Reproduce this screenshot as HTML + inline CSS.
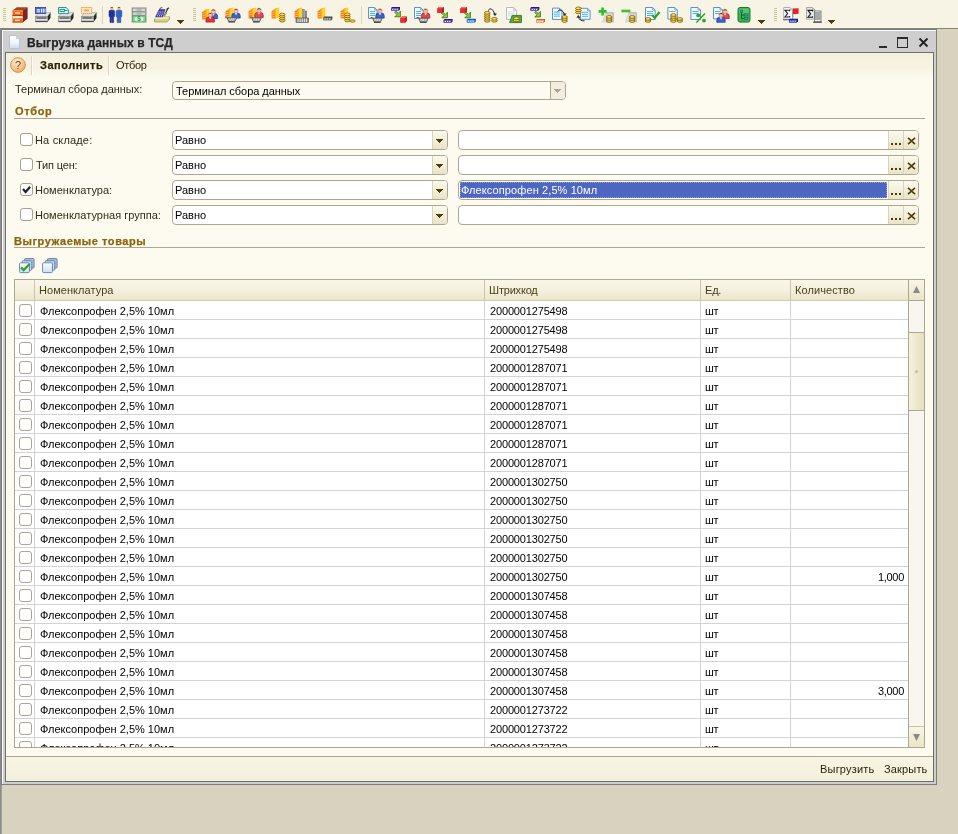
<!DOCTYPE html>
<html lang="ru"><head><meta charset="utf-8"><title>Выгрузка данных в ТСД</title>
<style>
html,body{margin:0;padding:0}
body{width:958px;height:834px;position:relative;overflow:hidden;background:#d8d3bf;font-family:"Liberation Sans", sans-serif;font-size:11px}
div,svg{box-sizing:border-box}

.abs{position:absolute}
.tb{position:absolute;left:0;top:0;width:958px;height:28px;background:#f7f4e5}
.ic{position:absolute;top:7px;width:16px;height:16px;overflow:visible}
.grip{position:absolute;top:8px;width:3px;height:13px;background:repeating-linear-gradient(to bottom,#c9c3a4 0,#c9c3a4 1px,transparent 1px,transparent 2px)}
.tsep{position:absolute;top:6px;width:1px;height:18px;background:#dcd6bd}
.darr{position:absolute;width:7px;height:4px;background:#4d3d0a;clip-path:polygon(0 0,7px 0,7px 1px,6px 1px,6px 2px,5px 2px,5px 3px,4px 3px,4px 4px,3px 4px,3px 3px,2px 3px,2px 2px,1px 2px,1px 1px,0 1px)}
.win{position:absolute;left:1px;top:29px;width:936px;height:756px;background:#cececf;border:1px solid #7d7d7d}
.winhl{position:absolute;left:0;top:0;right:0;bottom:0;border-top:1px solid #fafafa;border-left:1px solid #fafafa}
.inner{position:absolute;left:5px;top:52px;width:929px;height:730px;border:1px solid #6e6e6e;background:#fdfbf0}
.cmd{position:absolute;left:6px;top:53px;width:927px;height:24px;background:linear-gradient(to bottom,#f3f0dc 0,#f6f3e2 60%,#fcfaee 100%)}
.fld{position:absolute;height:20px;border:1px solid #aca791;border-radius:4px;background:#fff}
.btn{position:absolute;top:0;height:18px;width:15px;background:linear-gradient(to bottom,#fbf9ee 0,#f3efda 50%,#e9e3c8 100%);border-left:1px solid #d9d3b8}
.cb{position:absolute;width:13px;height:13px;border:1px solid #a8a28c;border-radius:3px;background:#fff}
.sec{position:absolute;height:1px;background:#aca791}
.lbl{color:#2e2b18}
.hdr{position:absolute;top:280px;height:20px;background:linear-gradient(to bottom,#f9f7ea 0,#f5f1df 45%,#ece6cb 100%);border-right:1px solid #c9c2a3}
.row{position:absolute;left:15px;width:893px;height:19px;border-bottom:1px solid #d0d3da}
.row div{line-height:14px}
.vl{position:absolute;top:301px;width:1px;height:446px;background:#d0d3da}

</style></head><body><div id="root" style="position:absolute;left:0;top:0;width:958px;height:834px;will-change:transform">
<div class="tb">
<div class="grip" style="left:3px"></div>
<svg class="ic" style="left:12px" viewBox="0 0 16 16"><polygon points="0.5,3.4 4.8,0.3 15.6,0.3 10.8,3.4" fill="#a54031"/><polygon points="10.8,3.4 15.6,0.3 15.6,11.4 10.8,15.4" fill="#7c241b"/><rect x="0.5" y="3.4" width="10.3" height="12" fill="#f2641a"/><rect x="0.5" y="3.4" width="10.3" height="1" fill="#ff8c42"/><path d="M0.5,8.6 H10.8" stroke="#a63a06" stroke-width="1"/><rect x="0.9" y="9.2" width="9.6" height="2" fill="#fff6ee"/><rect x="3" y="5.2" width="5" height="1.5" fill="#ffe7a3"/><rect x="3" y="12.6" width="5" height="1.5" fill="#ffe7a3"/><path d="M0.5,15.2 H10.8" stroke="#c04a0a" stroke-width="0.8"/></svg>
<svg class="ic" style="left:35px" viewBox="0 0 16 16"><polygon points="0.5,9.4 3.6,5.6 15.5,5.6 12.6,9.4" fill="#e4e4e4" stroke="#8d8d8d" stroke-width="0.5"/><polygon points="12.6,9.4 15.5,5.6 15.5,11 12.6,14.8" fill="#262626"/><rect x="0.5" y="9.4" width="12.1" height="5.4" fill="#b9b9b9" stroke="#777" stroke-width="0.5"/><path d="M1.6,11 H11.4" stroke="#4a4a4a" stroke-width="1.1"/><path d="M1,12.7 H12.2" stroke="#efefef" stroke-width="0.9"/><path d="M0.6,14.6 H12.6" stroke="#3c3c3c" stroke-width="0.9"/><rect x="0.5" y="0.5" width="10.2" height="6" fill="#3d5fd0" stroke="#2a3f9c" stroke-width="0.8"/><rect x="1.6" y="2.2" width="3.6" height="1.4" fill="#e8eeff"/><rect x="1.6" y="4.2" width="3.6" height="1.2" fill="#e8eeff"/><rect x="6" y="1.6" width="1.1" height="4" fill="#e8eeff"/><rect x="7.8" y="1.6" width="1.1" height="4" fill="#e8eeff"/><rect x="9.5" y="1.6" width="0.9" height="4" fill="#e8eeff"/></svg>
<svg class="ic" style="left:58px" viewBox="0 0 16 16"><polygon points="0.5,9.4 3.6,5.6 15.5,5.6 12.6,9.4" fill="#e4e4e4" stroke="#8d8d8d" stroke-width="0.5"/><polygon points="12.6,9.4 15.5,5.6 15.5,11 12.6,14.8" fill="#262626"/><rect x="0.5" y="9.4" width="12.1" height="5.4" fill="#b9b9b9" stroke="#777" stroke-width="0.5"/><path d="M1.6,11 H11.4" stroke="#4a4a4a" stroke-width="1.1"/><path d="M1,12.7 H12.2" stroke="#efefef" stroke-width="0.9"/><path d="M0.6,14.6 H12.6" stroke="#3c3c3c" stroke-width="0.9"/><path d="M0.5,0.5 H8 L10.6,2.8 V6.6 H0.5 Z" fill="#d9f3f1" stroke="#2b9a97" stroke-width="1"/><path d="M2,2.4 H6.6 V4.6 H2 Z" fill="none" stroke="#1f8f8c" stroke-width="1"/><path d="M6.6,3.5 H9.6" stroke="#1f8f8c" stroke-width="1"/></svg>
<svg class="ic" style="left:81px" viewBox="0 0 16 16"><polygon points="0.5,9.4 3.6,5.6 15.5,5.6 12.6,9.4" fill="#e4e4e4" stroke="#8d8d8d" stroke-width="0.5"/><polygon points="12.6,9.4 15.5,5.6 15.5,11 12.6,14.8" fill="#262626"/><rect x="0.5" y="9.4" width="12.1" height="5.4" fill="#b9b9b9" stroke="#777" stroke-width="0.5"/><path d="M1.6,11 H11.4" stroke="#4a4a4a" stroke-width="1.1"/><path d="M1,12.7 H12.2" stroke="#efefef" stroke-width="0.9"/><path d="M0.6,14.6 H12.6" stroke="#3c3c3c" stroke-width="0.9"/><rect x="0.5" y="0.5" width="10.2" height="6" fill="#ffe9c9" stroke="#f08a24" stroke-width="1" stroke-dasharray="1.2 0.8"/><rect x="3" y="2.4" width="5" height="2" fill="#f4a35a"/></svg>
<svg class="ic" style="left:108px" viewBox="0 0 16 16"><circle cx="3.8000000000000003" cy="1.6" r="1.6" fill="#f2b48c"/><path d="M2.2,1 Q3.8000000000000003,-0.8 5.3999999999999995,1 Z" fill="#7a4a20"/><path d="M1.0,4.4 Q1.0,3.3 2.2,3.3 H5.3999999999999995 Q6.6,3.3 6.6,4.4 V9.6 H5.6,V15.6 H4.1 V10 H3.5 V15.6 H2.0 V9.6 H1.0 Z" fill="#1f2fa5" stroke="#14206e" stroke-width="0.5"/><circle cx="11.0" cy="1.6" r="1.6" fill="#f2b48c"/><path d="M9.4,1 Q11.0,-0.8 12.6,1 Z" fill="#7a4a20"/><path d="M8.2,4.4 Q8.2,3.3 9.4,3.3 H12.6 Q13.8,3.3 13.8,4.4 V9.6 H12.8,V15.6 H11.3 V10 H10.7 V15.6 H9.2 V9.6 H8.2 Z" fill="#2f62cf" stroke="#1c3c94" stroke-width="0.5"/></svg>
<svg class="ic" style="left:131px" viewBox="0 0 16 16"><rect x="0.6" y="0.4" width="15" height="15" fill="#a2aaa2"/><rect x="1.6" y="1.2" width="13" height="3.4" fill="#d7dcd7" stroke="#7c857c" stroke-width="0.6"/><rect x="1.6" y="5" width="13" height="3.4" fill="#cfd6cf" stroke="#7c857c" stroke-width="0.6"/><ellipse cx="8.1" cy="2.9" rx="3" ry="1" fill="#aeb6ae"/><ellipse cx="8.1" cy="6.7" rx="3" ry="1" fill="#aeb6ae"/><rect x="1.6" y="8.9" width="13" height="6" fill="#86d198" stroke="#4d9c60" stroke-width="0.7"/><ellipse cx="8.1" cy="11.9" rx="4.6" ry="2.5" fill="#d4fadc"/><text x="8.1" y="14.2" font-size="6.5" font-weight="bold" text-anchor="middle" fill="#2f8a45" font-family="Liberation Sans, sans-serif">$</text></svg>
<svg class="ic" style="left:154px" viewBox="0 0 16 16"><polygon points="0.5,12 3,9.6 15.5,9.6 15.5,12.6 13,15 0.5,15" fill="#d9cf8e" stroke="#8b8146" stroke-width="0.6"/><polygon points="0.5,12 3,9.6 15.5,9.6 13,12" fill="#efe8b8"/><polygon points="1.6,9.8 5.2,2.6 11,2.6 8.6,9.8" fill="#4b3fae" stroke="#2b2470" stroke-width="0.6"/><path d="M4.4,5 H9.4 M3.6,7 H8.8 M3,8.8 H8" stroke="#d9d4ff" stroke-width="1" stroke-dasharray="1 1"/><path d="M5.6,2.4 L6.6,0.8 H8.4" stroke="#333" stroke-width="0.9" fill="none"/><path d="M10,9 L13.6,2.2 M12.4,2.6 L15,0.8" stroke="#2f4a2a" stroke-width="1.3" fill="none"/><path d="M10,9.6 L12.4,5.6" stroke="#9aa06a" stroke-width="1.6"/></svg>
<svg class="ic" style="left:202px" viewBox="0 0 16 16"><g transform="translate(0,1)"><polygon points="0,4.2 4,1.6 4,11.5 0,11.5" fill="#f2801c"/><polygon points="4,1.6 7.6,0.6 7.6,10.4 4,11.5" fill="#ffd51c"/><polygon points="0,4.2 4,1.6 7.6,0.6 3.6,3" fill="#ffb437"/><path d="M0,6 L4,4.6 M0,8 L4,6.8 M0,10 L4,9" stroke="#ffc266" stroke-width="0.8"/><path d="M4,1.6 V11.5" stroke="#f6a81a" stroke-width="0.7"/></g><path d="M7.2,11.7 V9.4 Q7.2,6.8 9.8,6.6000000000000005 H13.0 Q15.600000000000001,6.8 15.600000000000001,9.4 V11.7 Z" fill="#3b63d6" stroke="#1b3796" stroke-width="0.7"/><path d="M10.1,6.7 L11.4,8.8 L12.700000000000001,6.7 Z" fill="#fff"/><circle cx="11.4" cy="4.5" r="2.2" fill="#f6c3a2" stroke="#b8785c" stroke-width="0.5"/><path d="M9.2,4.1 Q11.4,0.9000000000000001 13.600000000000001,4.1 Q11.4,2.6 9.2,4.1 Z" fill="#6a1d10"/><path d="M3.999999999999999,15.1 V12.8 Q3.999999999999999,10.2 6.6,10.0 H9.799999999999999 Q12.399999999999999,10.2 12.399999999999999,12.8 V15.1 Z" fill="#e8333a" stroke="#a01218" stroke-width="0.7"/><path d="M6.8999999999999995,10.1 L8.2,12.2 L9.5,10.1 Z" fill="#fff"/><circle cx="8.2" cy="7.8999999999999995" r="2.2" fill="#f6c3a2" stroke="#b8785c" stroke-width="0.5"/><path d="M5.999999999999999,7.5 Q8.2,4.3 10.399999999999999,7.5 Q8.2,6.0 5.999999999999999,7.5 Z" fill="#6a1d10"/></svg>
<svg class="ic" style="left:225px" viewBox="0 0 16 16"><g transform="translate(0.6,0)"><polygon points="0,4.2 4,1.6 4,11.5 0,11.5" fill="#f2801c"/><polygon points="4,1.6 7.6,0.6 7.6,10.4 4,11.5" fill="#ffd51c"/><polygon points="0,4.2 4,1.6 7.6,0.6 3.6,3" fill="#ffb437"/><path d="M0,6 L4,4.6 M0,8 L4,6.8 M0,10 L4,9" stroke="#ffc266" stroke-width="0.8"/><path d="M4,1.6 V11.5" stroke="#f6a81a" stroke-width="0.7"/></g><path d="M6.8,11.1 V8.8 Q6.8,6.199999999999999 9.4,6.0 H12.6 Q15.2,6.199999999999999 15.2,8.8 V11.1 Z" fill="#3b63d6" stroke="#1b3796" stroke-width="0.7"/><path d="M9.7,6.1 L11,8.2 L12.3,6.1 Z" fill="#fff"/><circle cx="11" cy="3.9" r="2.2" fill="#f6c3a2" stroke="#b8785c" stroke-width="0.5"/><path d="M8.8,3.5 Q11,0.30000000000000004 13.2,3.5 Q11,2.0 8.8,3.5 Z" fill="#6a1d10"/><g transform="translate(0,9.6)"><path d="M0,0.5 H2 L3.6,4.8 H10 L11.6,1.2 H2.4" fill="#e9e9e9" stroke="#575757" stroke-width="1"/><path d="M3.6,1.4 L5,4.6 M5.6,1.4 L6.6,4.6 M7.6,1.4 L8.2,4.6 M9.6,1.4 L9.6,4.6" stroke="#8b8b8b" stroke-width="0.7"/><path d="M3.4,5.4 H10" stroke="#444" stroke-width="1.1"/></g></svg>
<svg class="ic" style="left:248px" viewBox="0 0 16 16"><g transform="translate(0.6,0)"><polygon points="0,4.2 4,1.6 4,11.5 0,11.5" fill="#f2801c"/><polygon points="4,1.6 7.6,0.6 7.6,10.4 4,11.5" fill="#ffd51c"/><polygon points="0,4.2 4,1.6 7.6,0.6 3.6,3" fill="#ffb437"/><path d="M0,6 L4,4.6 M0,8 L4,6.8 M0,10 L4,9" stroke="#ffc266" stroke-width="0.8"/><path d="M4,1.6 V11.5" stroke="#f6a81a" stroke-width="0.7"/></g><path d="M6.8,10.5 V8.2 Q6.8,5.6 9.4,5.4 H12.6 Q15.2,5.6 15.2,8.2 V10.5 Z" fill="#e8474d" stroke="#a01218" stroke-width="0.7"/><path d="M9.7,5.5 L11,7.6 L12.3,5.5 Z" fill="#fff"/><circle cx="11" cy="3.3" r="2.2" fill="#f6c3a2" stroke="#b8785c" stroke-width="0.5"/><path d="M8.8,2.9 Q11,-0.30000000000000004 13.2,2.9 Q11,1.4 8.8,2.9 Z" fill="#6a1d10"/><g transform="translate(1.6,9.6)"><path d="M0,0.5 H2 L3.6,4.8 H10 L11.6,1.2 H2.4" fill="#e9e9e9" stroke="#575757" stroke-width="1"/><path d="M3.6,1.4 L5,4.6 M5.6,1.4 L6.6,4.6 M7.6,1.4 L8.2,4.6 M9.6,1.4 L9.6,4.6" stroke="#8b8b8b" stroke-width="0.7"/><path d="M3.4,5.4 H10" stroke="#444" stroke-width="1.1"/></g></svg>
<svg class="ic" style="left:271px" viewBox="0 0 16 16"><g transform="translate(0.6,0)"><polygon points="0,4.2 4,1.6 4,11.5 0,11.5" fill="#f2801c"/><polygon points="4,1.6 7.6,0.6 7.6,10.4 4,11.5" fill="#ffd51c"/><polygon points="0,4.2 4,1.6 7.6,0.6 3.6,3" fill="#ffb437"/><path d="M0,6 L4,4.6 M0,8 L4,6.8 M0,10 L4,9" stroke="#ffc266" stroke-width="0.8"/><path d="M4,1.6 V11.5" stroke="#f6a81a" stroke-width="0.7"/></g><ellipse cx="11.2" cy="13.6" rx="2.8" ry="1.35" fill="#ffd738" stroke="#6b4a00" stroke-width="0.75"/><path d="M9.6,13.25 H12.2" stroke="#fff6b8" stroke-width="0.55"/><ellipse cx="11.2" cy="11.6" rx="2.8" ry="1.35" fill="#ffd738" stroke="#6b4a00" stroke-width="0.75"/><path d="M9.6,11.25 H12.2" stroke="#fff6b8" stroke-width="0.55"/><ellipse cx="11.2" cy="9.6" rx="2.8" ry="1.35" fill="#ffd738" stroke="#6b4a00" stroke-width="0.75"/><path d="M9.6,9.25 H12.2" stroke="#fff6b8" stroke-width="0.55"/><ellipse cx="11.2" cy="7.6" rx="2.8" ry="1.35" fill="#ffd738" stroke="#6b4a00" stroke-width="0.75"/><path d="M9.6,7.25 H12.2" stroke="#fff6b8" stroke-width="0.55"/></svg>
<svg class="ic" style="left:294px" viewBox="0 0 16 16"><g transform="translate(0.6,0)"><polygon points="0,4.2 4,1.6 4,11.5 0,11.5" fill="#f2801c"/><polygon points="4,1.6 7.6,0.6 7.6,10.4 4,11.5" fill="#ffd51c"/><polygon points="0,4.2 4,1.6 7.6,0.6 3.6,3" fill="#ffb437"/><path d="M0,6 L4,4.6 M0,8 L4,6.8 M0,10 L4,9" stroke="#ffc266" stroke-width="0.8"/><path d="M4,1.6 V11.5" stroke="#f6a81a" stroke-width="0.7"/></g><rect x="8.6" y="2.4" width="1.6" height="9" fill="#8d9aa0" stroke="#4d585c" stroke-width="0.4"/><rect x="11.2" y="4" width="1.6" height="7.6" fill="#8d9aa0" stroke="#4d585c" stroke-width="0.4"/><rect x="2" y="11" width="12.6" height="4.4" fill="#8a8a8a" stroke="#4b4b4b" stroke-width="0.6"/><path d="M4,11.6 V15 M6.2,11.6 V15 M8.4,11.6 V15 M10.6,11.6 V15 M12.6,11.6 V15" stroke="#e6e6e6" stroke-width="1"/></svg>
<svg class="ic" style="left:317px" viewBox="0 0 16 16"><g transform="translate(0.6,0)"><polygon points="0,4.2 4,1.6 4,11.5 0,11.5" fill="#f2801c"/><polygon points="4,1.6 7.6,0.6 7.6,10.4 4,11.5" fill="#ffd51c"/><polygon points="0,4.2 4,1.6 7.6,0.6 3.6,3" fill="#ffb437"/><path d="M0,6 L4,4.6 M0,8 L4,6.8 M0,10 L4,9" stroke="#ffc266" stroke-width="0.8"/><path d="M4,1.6 V11.5" stroke="#f6a81a" stroke-width="0.7"/></g><polygon points="6.4,10.6 7.4,9.6 15.4,9.6 15.4,12.1 14.4,13.2 6.4,13.2" fill="#3c3c3c"/><rect x="6.4" y="10.6" width="8" height="2.6" fill="#7b7b7b"/><rect x="7.6000000000000005" y="11.4" width="1.2" height="1.1" fill="#d6d6d6"/><rect x="9.8" y="11.4" width="1.2" height="1.1" fill="#d6d6d6"/><rect x="12.0" y="11.4" width="1.2" height="1.1" fill="#d6d6d6"/></svg>
<svg class="ic" style="left:340px" viewBox="0 0 16 16"><g transform="translate(0.6,0)"><polygon points="0,4.2 4,1.6 4,11.5 0,11.5" fill="#f2801c"/><polygon points="4,1.6 7.6,0.6 7.6,10.4 4,11.5" fill="#ffd51c"/><polygon points="0,4.2 4,1.6 7.6,0.6 3.6,3" fill="#ffb437"/><path d="M0,6 L4,4.6 M0,8 L4,6.8 M0,10 L4,9" stroke="#ffc266" stroke-width="0.8"/><path d="M4,1.6 V11.5" stroke="#f6a81a" stroke-width="0.7"/></g><ellipse cx="7.4" cy="13.4" rx="2.8" ry="1.35" fill="#ffd738" stroke="#6b4a00" stroke-width="0.75"/><path d="M5.800000000000001,13.05 H8.4" stroke="#fff6b8" stroke-width="0.55"/><ellipse cx="7.4" cy="11.4" rx="2.8" ry="1.35" fill="#ffd738" stroke="#6b4a00" stroke-width="0.75"/><path d="M5.800000000000001,11.05 H8.4" stroke="#fff6b8" stroke-width="0.55"/><ellipse cx="7.4" cy="9.4" rx="2.8" ry="1.35" fill="#ffd738" stroke="#6b4a00" stroke-width="0.75"/><path d="M5.800000000000001,9.05 H8.4" stroke="#fff6b8" stroke-width="0.55"/><ellipse cx="7.4" cy="7.4" rx="2.8" ry="1.35" fill="#ffd738" stroke="#6b4a00" stroke-width="0.75"/><path d="M5.800000000000001,7.050000000000001 H8.4" stroke="#fff6b8" stroke-width="0.55"/><ellipse cx="12.4" cy="14" rx="2.8" ry="1.2" fill="#f7cf2e" stroke="#7a5a00" stroke-width="0.7"/></svg>
<svg class="ic" style="left:368px" viewBox="0 0 16 16"><path d="M0.5,0.5 H6.6 L9.1,3 V11.5 H0.5 Z" fill="#f3f9ff" stroke="#5f93c4" stroke-width="1"/><path d="M6.6,0.5 V3 H9.1" fill="none" stroke="#5f93c4" stroke-width="0.8"/><path d="M2,4.5 H7.1" stroke="#4fb4e6" stroke-width="1"/><path d="M2,6.5 H7.1" stroke="#4fb4e6" stroke-width="1"/><path d="M2,8.5 H7.1" stroke="#4fb4e6" stroke-width="1"/><path d="M7.8,11.1 V8.8 Q7.8,6.199999999999999 10.4,6.0 H13.6 Q16.2,6.199999999999999 16.2,8.8 V11.1 Z" fill="#3b63d6" stroke="#1b3796" stroke-width="0.7"/><path d="M10.7,6.1 L12,8.2 L13.3,6.1 Z" fill="#fff"/><circle cx="12" cy="3.9" r="2.2" fill="#f6c3a2" stroke="#b8785c" stroke-width="0.5"/><path d="M9.8,3.5 Q12,0.30000000000000004 14.2,3.5 Q12,2.0 9.8,3.5 Z" fill="#6a1d10"/><g transform="translate(2.6,10)"><path d="M0,0.5 H2 L3.6,4.8 H10 L11.6,1.2 H2.4" fill="#e9e9e9" stroke="#575757" stroke-width="1"/><path d="M3.6,1.4 L5,4.6 M5.6,1.4 L6.6,4.6 M7.6,1.4 L8.2,4.6 M9.6,1.4 L9.6,4.6" stroke="#8b8b8b" stroke-width="0.7"/><path d="M3.4,5.4 H10" stroke="#444" stroke-width="1.1"/></g></svg>
<svg class="ic" style="left:391px" viewBox="0 0 16 16"><polygon points="0,1 1,0 9,0 9,2.5 8,3.6 0,3.6" fill="#2a1a78"/><rect x="0" y="1" width="8" height="2.6" fill="#5b3fc4"/><rect x="1.2" y="1.8" width="1.2" height="1.1" fill="#fff"/><rect x="3.4" y="1.8" width="1.2" height="1.1" fill="#fff"/><rect x="5.6" y="1.8" width="1.2" height="1.1" fill="#fff"/><path d="M3.6,5.2 L4.8,4 L7.2,6.4 L9.4,4.2 V9.8 H3.8000000000000003 L6.0,7.6 Z" fill="#8fd03a" stroke="#2e6b12" stroke-width="0.8"/><polygon points="9.4,11.1 10.9,9.6 15.9,9.6 15.9,14.1 14.4,15.6 9.4,15.6" fill="#a80f14"/><rect x="9.4" y="11.1" width="5" height="4.5" fill="#ee2a2f"/><polygon points="9.4,11.1 10.9,9.6 15.9,9.6 14.4,11.1" fill="#ff6b6b"/></svg>
<svg class="ic" style="left:414px" viewBox="0 0 16 16"><path d="M0.5,0.5 H6.6 L9.1,3 V11.5 H0.5 Z" fill="#f3f9ff" stroke="#5f93c4" stroke-width="1"/><path d="M6.6,0.5 V3 H9.1" fill="none" stroke="#5f93c4" stroke-width="0.8"/><path d="M2,4.5 H7.1" stroke="#4fb4e6" stroke-width="1"/><path d="M2,6.5 H7.1" stroke="#4fb4e6" stroke-width="1"/><path d="M2,8.5 H7.1" stroke="#4fb4e6" stroke-width="1"/><path d="M7.3999999999999995,11.1 V8.8 Q7.3999999999999995,6.199999999999999 10.0,6.0 H13.2 Q15.8,6.199999999999999 15.8,8.8 V11.1 Z" fill="#e8474d" stroke="#a01218" stroke-width="0.7"/><path d="M10.299999999999999,6.1 L11.6,8.2 L12.9,6.1 Z" fill="#fff"/><circle cx="11.6" cy="3.9" r="2.2" fill="#f6c3a2" stroke="#b8785c" stroke-width="0.5"/><path d="M9.399999999999999,3.5 Q11.6,0.30000000000000004 13.8,3.5 Q11.6,2.0 9.399999999999999,3.5 Z" fill="#6a1d10"/><g transform="translate(2.6,10)"><path d="M0,0.5 H2 L3.6,4.8 H10 L11.6,1.2 H2.4" fill="#e9e9e9" stroke="#575757" stroke-width="1"/><path d="M3.6,1.4 L5,4.6 M5.6,1.4 L6.6,4.6 M7.6,1.4 L8.2,4.6 M9.6,1.4 L9.6,4.6" stroke="#8b8b8b" stroke-width="0.7"/><path d="M3.4,5.4 H10" stroke="#444" stroke-width="1.1"/></g></svg>
<svg class="ic" style="left:437px" viewBox="0 0 16 16"><polygon points="0.4,1.5 1.9,0 6.9,0 6.9,4.5 5.4,6 0.4,6" fill="#a80f14"/><rect x="0.4" y="1.5" width="5" height="4.5" fill="#ee2a2f"/><polygon points="0.4,1.5 1.9,0 6.9,0 5.4,1.5" fill="#ff6b6b"/><path d="M4.6,6.2 L5.8,5 L8.2,7.4 L10.399999999999999,5.2 V10.8 H4.8 L7.0,8.6 Z" fill="#8fd03a" stroke="#2e6b12" stroke-width="0.8"/><polygon points="6.6,13 7.6,12 15.6,12 15.6,14.5 14.6,15.6 6.6,15.6" fill="#2a1a78"/><rect x="6.6" y="13" width="8" height="2.6" fill="#5b3fc4"/><rect x="7.8" y="13.8" width="1.2" height="1.1" fill="#fff"/><rect x="10.0" y="13.8" width="1.2" height="1.1" fill="#fff"/><rect x="12.2" y="13.8" width="1.2" height="1.1" fill="#fff"/></svg>
<svg class="ic" style="left:460px" viewBox="0 0 16 16"><polygon points="0.4,1.5 1.9,0 6.9,0 6.9,4.5 5.4,6 0.4,6" fill="#a80f14"/><rect x="0.4" y="1.5" width="5" height="4.5" fill="#ee2a2f"/><polygon points="0.4,1.5 1.9,0 6.9,0 5.4,1.5" fill="#ff6b6b"/><path d="M4.6,6.2 L5.8,5 L8.2,7.4 L10.399999999999999,5.2 V10.8 H4.8 L7.0,8.6 Z" fill="#8fd03a" stroke="#2e6b12" stroke-width="0.8"/><polygon points="6.8,12.8 7.8,11.8 15.8,11.8 15.8,14.3 14.8,15.4 6.8,15.4" fill="#1a4ea8"/><rect x="6.8" y="12.8" width="8" height="2.6" fill="#3f8ff0"/><rect x="8.0" y="13.600000000000001" width="1.2" height="1.1" fill="#fff"/><rect x="10.2" y="13.600000000000001" width="1.2" height="1.1" fill="#fff"/><rect x="12.399999999999999" y="13.600000000000001" width="1.2" height="1.1" fill="#fff"/></svg>
<svg class="ic" style="left:483px" viewBox="0 0 16 16"><ellipse cx="4.2" cy="13.8" rx="2.8" ry="1.35" fill="#ffd738" stroke="#6b4a00" stroke-width="0.75"/><path d="M2.6,13.450000000000001 H5.2" stroke="#fff6b8" stroke-width="0.55"/><ellipse cx="4.2" cy="11.8" rx="2.8" ry="1.35" fill="#ffd738" stroke="#6b4a00" stroke-width="0.75"/><path d="M2.6,11.450000000000001 H5.2" stroke="#fff6b8" stroke-width="0.55"/><ellipse cx="4.2" cy="9.8" rx="2.8" ry="1.35" fill="#ffd738" stroke="#6b4a00" stroke-width="0.75"/><path d="M2.6,9.450000000000001 H5.2" stroke="#fff6b8" stroke-width="0.55"/><ellipse cx="4.2" cy="7.800000000000001" rx="2.8" ry="1.35" fill="#ffd738" stroke="#6b4a00" stroke-width="0.75"/><path d="M2.6,7.450000000000001 H5.2" stroke="#fff6b8" stroke-width="0.55"/><ellipse cx="4.2" cy="5.800000000000001" rx="2.8" ry="1.35" fill="#ffd738" stroke="#6b4a00" stroke-width="0.75"/><path d="M2.6,5.450000000000001 H5.2" stroke="#fff6b8" stroke-width="0.55"/><ellipse cx="11.4" cy="13.8" rx="2.8" ry="1.35" fill="#ffd738" stroke="#6b4a00" stroke-width="0.75"/><path d="M9.8,13.450000000000001 H12.4" stroke="#fff6b8" stroke-width="0.55"/><ellipse cx="11.4" cy="11.8" rx="2.8" ry="1.35" fill="#ffd738" stroke="#6b4a00" stroke-width="0.75"/><path d="M9.8,11.450000000000001 H12.4" stroke="#fff6b8" stroke-width="0.55"/><path d="M5,3.6 Q8.5,-1.4 12,7.3999999999999995" fill="none" stroke="#1c2a44" stroke-width="1"/><path d="M10,6.6 L12,9.0 L14,6.6 Z" fill="#1c2a44"/></svg>
<svg class="ic" style="left:506px" viewBox="0 0 16 16"><path d="M0.5,0.5 H7.6 L10.5,3.4 V12.5 H0.5 Z" fill="#fbfbff" stroke="#b8b8c2" stroke-width="1"/><path d="M7.6,0.5 V3.4 H10.5" fill="none" stroke="#b8b8c2" stroke-width="0.8"/><path d="M2,4.9 H8.5" stroke="#d5d5de" stroke-width="1"/><path d="M2,6.9 H8.5" stroke="#d5d5de" stroke-width="1"/><path d="M2,8.9 H8.5" stroke="#d5d5de" stroke-width="1"/><polygon points="3.6,15.6 6.2,8.4 15.4,8.4 15.4,15.6" fill="#4fae3c" stroke="#256a1c" stroke-width="0.8"/><ellipse cx="10.4" cy="13.4" rx="2.8" ry="1.35" fill="#ffd738" stroke="#6b4a00" stroke-width="0.75"/><path d="M8.8,13.05 H11.4" stroke="#fff6b8" stroke-width="0.55"/><ellipse cx="10.4" cy="11.4" rx="2.8" ry="1.35" fill="#ffd738" stroke="#6b4a00" stroke-width="0.75"/><path d="M8.8,11.05 H11.4" stroke="#fff6b8" stroke-width="0.55"/></svg>
<svg class="ic" style="left:529px" viewBox="0 0 16 16"><polygon points="1.4,1 2.4,0 10.4,0 10.4,2.5 9.4,3.6 1.4,3.6" fill="#2a1a78"/><rect x="1.4" y="1" width="8" height="2.6" fill="#5b3fc4"/><rect x="2.5999999999999996" y="1.8" width="1.2" height="1.1" fill="#fff"/><rect x="4.8" y="1.8" width="1.2" height="1.1" fill="#fff"/><rect x="7.0" y="1.8" width="1.2" height="1.1" fill="#fff"/><path d="M5.6,5.4 L6.8,4.2 L9.2,6.6 L11.399999999999999,4.4 V10.0 H5.8 L8.0,7.800000000000001 Z" fill="#8fd03a" stroke="#2e6b12" stroke-width="0.8"/><polygon points="7,13 8,12 16,12 16,14.5 15,15.6 7,15.6" fill="#b9622a"/><rect x="7" y="13" width="8" height="2.6" fill="#f2a060"/><rect x="8.2" y="13.8" width="1.2" height="1.1" fill="#fff"/><rect x="10.4" y="13.8" width="1.2" height="1.1" fill="#fff"/><rect x="12.6" y="13.8" width="1.2" height="1.1" fill="#fff"/></svg>
<svg class="ic" style="left:552px" viewBox="0 0 16 16"><path d="M0.5,1.1 H7.4 L9.9,3.6 V12.5 H0.5 Z" fill="#f3f9ff" stroke="#5f93c4" stroke-width="1"/><path d="M7.4,1.1 V3.6 H9.9" fill="none" stroke="#5f93c4" stroke-width="0.8"/><path d="M2,5.1 H7.9" stroke="#4fb4e6" stroke-width="1"/><path d="M2,7.1 H7.9" stroke="#4fb4e6" stroke-width="1"/><path d="M2,9.1 H7.9" stroke="#4fb4e6" stroke-width="1"/><path d="M5.6,4.6 Q9.1,0.0 12.6,7.3999999999999995" fill="none" stroke="#1c2a44" stroke-width="1"/><path d="M10.6,6.6 L12.6,9.0 L14.6,6.6 Z" fill="#1c2a44"/><ellipse cx="12.6" cy="14.0" rx="2.8" ry="1.35" fill="#ffd738" stroke="#6b4a00" stroke-width="0.75"/><path d="M11.0,13.65 H13.6" stroke="#fff6b8" stroke-width="0.55"/><ellipse cx="12.6" cy="12.0" rx="2.8" ry="1.35" fill="#ffd738" stroke="#6b4a00" stroke-width="0.75"/><path d="M11.0,11.65 H13.6" stroke="#fff6b8" stroke-width="0.55"/><ellipse cx="12.6" cy="10.0" rx="2.8" ry="1.35" fill="#ffd738" stroke="#6b4a00" stroke-width="0.75"/><path d="M11.0,9.65 H13.6" stroke="#fff6b8" stroke-width="0.55"/></svg>
<svg class="ic" style="left:575px" viewBox="0 0 16 16"><path d="M5.5,1.3 H12.6 L15.1,3.8 V12.3 H5.5 Z" fill="#f3f9ff" stroke="#5f93c4" stroke-width="1"/><path d="M12.6,1.3 V3.8 H15.1" fill="none" stroke="#5f93c4" stroke-width="0.8"/><path d="M7,5.3 H13.1" stroke="#4fb4e6" stroke-width="1"/><path d="M7,7.3 H13.1" stroke="#4fb4e6" stroke-width="1"/><path d="M7,9.3 H13.1" stroke="#4fb4e6" stroke-width="1"/><ellipse cx="3.4" cy="5.4" rx="2.8" ry="1.35" fill="#ffd738" stroke="#6b4a00" stroke-width="0.75"/><path d="M1.7999999999999998,5.050000000000001 H4.4" stroke="#fff6b8" stroke-width="0.55"/><ellipse cx="3.4" cy="3.4000000000000004" rx="2.8" ry="1.35" fill="#ffd738" stroke="#6b4a00" stroke-width="0.75"/><path d="M1.7999999999999998,3.0500000000000003 H4.4" stroke="#fff6b8" stroke-width="0.55"/><ellipse cx="3.4" cy="1.4000000000000004" rx="2.8" ry="1.35" fill="#ffd738" stroke="#6b4a00" stroke-width="0.75"/><path d="M1.7999999999999998,1.0500000000000003 H4.4" stroke="#fff6b8" stroke-width="0.55"/><path d="M9.6,13.8 Q4.4,14.4 3.4,9.6" fill="none" stroke="#1c2a44" stroke-width="1"/><path d="M1.4,10.8 L3.4,8 L5.4,10.8 Z" fill="#1c2a44"/></svg>
<svg class="ic" style="left:598px" viewBox="0 0 16 16"><polygon points="3.6,15.6 7.6,5.6 15.4,5.6 15.4,15.6" fill="#d8d8d8"/><path d="M7.4,5.8 H15.2 V15.4" fill="none" stroke="#a0a0a0" stroke-width="0.8"/><path d="M4.6,0.4 V8.4 M0.6,4.4 H8.6" stroke="#27c31f" stroke-width="2.6"/><ellipse cx="11.2" cy="14.0" rx="2.8" ry="1.35" fill="#ffd738" stroke="#6b4a00" stroke-width="0.75"/><path d="M9.6,13.65 H12.2" stroke="#fff6b8" stroke-width="0.55"/><ellipse cx="11.2" cy="12.0" rx="2.8" ry="1.35" fill="#ffd738" stroke="#6b4a00" stroke-width="0.75"/><path d="M9.6,11.65 H12.2" stroke="#fff6b8" stroke-width="0.55"/><ellipse cx="11.2" cy="10.0" rx="2.8" ry="1.35" fill="#ffd738" stroke="#6b4a00" stroke-width="0.75"/><path d="M9.6,9.65 H12.2" stroke="#fff6b8" stroke-width="0.55"/></svg>
<svg class="ic" style="left:621px" viewBox="0 0 16 16"><polygon points="3.6,15.6 7.6,5.6 15.4,5.6 15.4,15.6" fill="#d8d8d8"/><path d="M7.4,5.8 H15.2 V15.4" fill="none" stroke="#a0a0a0" stroke-width="0.8"/><path d="M0.4,4 H9.4" stroke="#3ac232" stroke-width="2.6"/><ellipse cx="11.2" cy="14.0" rx="2.8" ry="1.35" fill="#ffd738" stroke="#6b4a00" stroke-width="0.75"/><path d="M9.6,13.65 H12.2" stroke="#fff6b8" stroke-width="0.55"/><ellipse cx="11.2" cy="12.0" rx="2.8" ry="1.35" fill="#ffd738" stroke="#6b4a00" stroke-width="0.75"/><path d="M9.6,11.65 H12.2" stroke="#fff6b8" stroke-width="0.55"/><ellipse cx="11.2" cy="10.0" rx="2.8" ry="1.35" fill="#ffd738" stroke="#6b4a00" stroke-width="0.75"/><path d="M9.6,9.65 H12.2" stroke="#fff6b8" stroke-width="0.55"/></svg>
<svg class="ic" style="left:644px" viewBox="0 0 16 16"><path d="M1.5,0.5 H8.6 L11.1,3 V12.5 H1.5 Z" fill="#f3f9ff" stroke="#5f93c4" stroke-width="1"/><path d="M8.6,0.5 V3 H11.1" fill="none" stroke="#5f93c4" stroke-width="0.8"/><path d="M3,4.5 H9.1" stroke="#4fb4e6" stroke-width="1"/><path d="M3,6.5 H9.1" stroke="#4fb4e6" stroke-width="1"/><path d="M3,8.5 H9.1" stroke="#4fb4e6" stroke-width="1"/><ellipse cx="4" cy="14.0" rx="2.8" ry="1.35" fill="#ffd738" stroke="#6b4a00" stroke-width="0.75"/><path d="M2.4,13.65 H5" stroke="#fff6b8" stroke-width="0.55"/><ellipse cx="4" cy="12.0" rx="2.8" ry="1.35" fill="#ffd738" stroke="#6b4a00" stroke-width="0.75"/><path d="M2.4,11.65 H5" stroke="#fff6b8" stroke-width="0.55"/><path d="M8.2,8 L10.8,10.8 L15.6,5" fill="none" stroke="#27a82a" stroke-width="2.2"/></svg>
<svg class="ic" style="left:667px" viewBox="0 0 16 16"><path d="M0.9,0.5 H7.800000000000001 L10.3,3 V12.1 H0.9 Z" fill="#f3f9ff" stroke="#5f93c4" stroke-width="1"/><path d="M7.800000000000001,0.5 V3 H10.3" fill="none" stroke="#5f93c4" stroke-width="0.8"/><path d="M2.4,4.5 H8.3" stroke="#4fb4e6" stroke-width="1"/><ellipse cx="6.4" cy="14.0" rx="2.8" ry="1.35" fill="#ffd738" stroke="#6b4a00" stroke-width="0.75"/><path d="M4.800000000000001,13.65 H7.4" stroke="#fff6b8" stroke-width="0.55"/><ellipse cx="6.4" cy="12.0" rx="2.8" ry="1.35" fill="#ffd738" stroke="#6b4a00" stroke-width="0.75"/><path d="M4.800000000000001,11.65 H7.4" stroke="#fff6b8" stroke-width="0.55"/><ellipse cx="6.4" cy="10.0" rx="2.8" ry="1.35" fill="#ffd738" stroke="#6b4a00" stroke-width="0.75"/><path d="M4.800000000000001,9.65 H7.4" stroke="#fff6b8" stroke-width="0.55"/><ellipse cx="6.4" cy="8.0" rx="2.8" ry="1.35" fill="#ffd738" stroke="#6b4a00" stroke-width="0.75"/><path d="M4.800000000000001,7.65 H7.4" stroke="#fff6b8" stroke-width="0.55"/><ellipse cx="12.8" cy="14.0" rx="2.8" ry="1.35" fill="#ffd738" stroke="#6b4a00" stroke-width="0.75"/><path d="M11.200000000000001,13.65 H13.8" stroke="#fff6b8" stroke-width="0.55"/><ellipse cx="12.8" cy="12.0" rx="2.8" ry="1.35" fill="#ffd738" stroke="#6b4a00" stroke-width="0.75"/><path d="M11.200000000000001,11.65 H13.8" stroke="#fff6b8" stroke-width="0.55"/></svg>
<svg class="ic" style="left:690px" viewBox="0 0 16 16"><path d="M0.9,0.5 H8.0 L10.5,3 V12.5 H0.9 Z" fill="#f3f9ff" stroke="#5f93c4" stroke-width="1"/><path d="M8.0,0.5 V3 H10.5" fill="none" stroke="#5f93c4" stroke-width="0.8"/><path d="M2.4,4.5 H8.5" stroke="#4fb4e6" stroke-width="1"/><path d="M2.4,6.5 H8.5" stroke="#4fb4e6" stroke-width="1"/><path d="M6.4,15.4 L15,6.4" stroke="#27a82a" stroke-width="1.5"/><circle cx="8.2" cy="8.4" r="1.9" fill="#27a82a"/><circle cx="14" cy="13.6" r="1.9" fill="#27a82a"/></svg>
<svg class="ic" style="left:713px" viewBox="0 0 16 16"><path d="M0.5,0.5 H7 L9.5,3 V11.9 H0.5 Z" fill="#f3f9ff" stroke="#5f93c4" stroke-width="1"/><path d="M7,0.5 V3 H9.5" fill="none" stroke="#5f93c4" stroke-width="0.8"/><path d="M2,4.5 H7.5" stroke="#4fb4e6" stroke-width="1"/><path d="M2,6.5 H7.5" stroke="#4fb4e6" stroke-width="1"/><path d="M7.8,11.5 V9.2 Q7.8,6.6 10.4,6.4 H13.6 Q16.2,6.6 16.2,9.2 V11.5 Z" fill="#e8474d" stroke="#a01218" stroke-width="0.7"/><path d="M10.7,6.5 L12,8.6 L13.3,6.5 Z" fill="#fff"/><circle cx="12" cy="4.3" r="2.2" fill="#f6c3a2" stroke="#b8785c" stroke-width="0.5"/><path d="M9.8,3.9 Q12,0.7 14.2,3.9 Q12,2.4 9.8,3.9 Z" fill="#6a1d10"/><path d="M3.8,15.3 V13.0 Q3.8,10.399999999999999 6.4,10.2 H9.6 Q12.2,10.399999999999999 12.2,13.0 V15.3 Z" fill="#3b63d6" stroke="#1b3796" stroke-width="0.7"/><path d="M6.7,10.3 L8,12.399999999999999 L9.3,10.3 Z" fill="#fff"/><circle cx="8" cy="8.1" r="2.2" fill="#f6c3a2" stroke="#b8785c" stroke-width="0.5"/><path d="M5.8,7.699999999999999 Q8,4.5 10.2,7.699999999999999 Q8,6.2 5.8,7.699999999999999 Z" fill="#6a1d10"/></svg>
<svg class="ic" style="left:736px" viewBox="0 0 16 16"><rect x="2" y="0.5" width="12" height="14.6" rx="2" fill="#35b24a" stroke="#1e7a30" stroke-width="1"/><rect x="3" y="1.4" width="10" height="5" rx="1.4" fill="#5fd070" opacity="0.7"/><rect x="4.2" y="3" width="2.6" height="2.4" fill="#38a0a0" stroke="#176060" stroke-width="0.5"/><path d="M5.5,5.4 V11.6 H8.6 M5.5,8 H8.6" fill="none" stroke="#0e5a2a" stroke-width="0.9"/><rect x="8.6" y="6.8" width="3.2" height="2.2" fill="#38a0a0" stroke="#176060" stroke-width="0.5"/><rect x="8.6" y="10.4" width="3.2" height="2.2" fill="#38a0a0" stroke="#176060" stroke-width="0.5"/></svg>
<svg class="ic" style="left:783px" viewBox="0 0 16 16"><path d="M0.7,0.5 H7.0 L9.5,3 V12.1 H0.7 Z" fill="#fcfcfc" stroke="#b0b0b0" stroke-width="1"/><path d="M7.0,0.5 V3 H9.5" fill="none" stroke="#b0b0b0" stroke-width="0.8"/><path d="M6.6,4.2 V3.2 H2 L4.6,6.6 L2,10.0 H6.6 V9.0" fill="none" stroke="#1d1d35" stroke-width="1.1"/><path d="M9.8,1.4 V11" stroke="#8a8a8a" stroke-width="0.8"/><polygon points="10,1.6 15.6,1.2 15.6,6.8 10,7.2" fill="#ee1c24"/><path d="M0,12.8 H9" stroke="#555" stroke-width="1"/><polygon points="6,12.8 7,11.8 15,11.8 15,14.3 14,15.4 6,15.4" fill="#151f80"/><rect x="6" y="12.8" width="8" height="2.6" fill="#2e3fd0"/><rect x="7.2" y="13.600000000000001" width="1.2" height="1.1" fill="#fff"/><rect x="9.4" y="13.600000000000001" width="1.2" height="1.1" fill="#fff"/><rect x="11.6" y="13.600000000000001" width="1.2" height="1.1" fill="#fff"/></svg>
<svg class="ic" style="left:806px" viewBox="0 0 16 16"><path d="M0.5,0.5 H6.6 L9.1,3 V12.1 H0.5 Z" fill="#e9e9e9" stroke="#a8a8a8" stroke-width="1"/><path d="M6.6,0.5 V3 H9.1" fill="none" stroke="#a8a8a8" stroke-width="0.8"/><path d="M6.6,4.4 V3.4 H2 L4.6,6.8 L2,10.2 H6.6 V9.2" fill="none" stroke="#1d1d1d" stroke-width="1.1"/><rect x="8.4" y="4" width="6.6" height="10.8" fill="#f4f4f4" stroke="#6a6a6a" stroke-width="0.8"/><path d="M9,6 H14.4 M9,8 H14.4 M9,10 H14.4 M9,12 H14.4" stroke="#5c5c5c" stroke-width="1"/><path d="M7.2,15.2 H15.8" stroke="#4a4a4a" stroke-width="1.2"/></svg>
<div class="tsep" style="left:102px"></div>
<div class="tsep" style="left:361px"></div>
<div class="grip" style="left:193px"></div>
<div class="grip" style="left:774px"></div>
<div class="darr" style="left:177px;top:20px"></div>
<div class="darr" style="left:758px;top:20px"></div>
<div class="darr" style="left:828px;top:20px"></div>
</div>
<div class="abs" style="left:0;top:28px;width:958px;height:1px;background:#858479"></div>
<div class="abs" style="left:0;top:28px;width:1px;height:806px;background:#8a8a86"></div>
<div class="abs" style="left:1px;top:785px;width:1px;height:49px;background:#a5a297"></div>
<div class="win"><div class="winhl"></div></div>
<svg class="abs" style="left:9px;top:35px;width:12px;height:14px" viewBox="0 0 12 14"><defs><linearGradient id="pg" x1="0" y1="0" x2="0" y2="1"><stop offset="0" stop-color="#ffffff"/><stop offset="0.55" stop-color="#f1f6fb"/><stop offset="1" stop-color="#c9dbec"/></linearGradient></defs><path d="M0.5,0.5 H7.6 L10.6,3.6 V13.5 H0.5 Z" fill="url(#pg)" stroke="#b9c3cf" stroke-width="1"/><path d="M7.6,0.5 V3.6 H10.6 Z" fill="#dfe7f0" stroke="#b9c3cf" stroke-width="0.8"/></svg>
<div style="position:absolute;top:36px;white-space:nowrap;font-size:12px;line-height:14px;color:#262626;left:27px;font-weight:bold;-webkit-text-stroke:0.25px;letter-spacing:0.1px;">Выгрузка данных в ТСД</div>
<div class="abs" style="left:879px;top:46px;width:8px;height:2px;background:#2a2a2a"></div>
<div class="abs" style="left:897px;top:37px;width:11px;height:11px;border:1px solid #2a2a2a;border-top-width:2px"></div>
<svg class="abs" style="left:918px;top:37px;width:11px;height:11px" viewBox="0 0 11 11"><path d="M1.5 1.5 L9.5 9.5 M9.5 1.5 L1.5 9.5" stroke="#222" stroke-width="1.9" fill="none"/></svg>
<div class="inner"></div>
<div class="cmd"></div>
<svg class="abs" style="left:10px;top:57px;width:16px;height:16px" viewBox="0 0 16 16"><defs><radialGradient id="hg" cx="0.4" cy="0.3" r="0.8"><stop offset="0" stop-color="#fdeccf"/><stop offset="0.55" stop-color="#f6c98e"/><stop offset="1" stop-color="#e39f52"/></radialGradient></defs><circle cx="8" cy="8" r="7.4" fill="url(#hg)" stroke="#c69563" stroke-width="0.9"/><text x="8" y="12" font-size="11" text-anchor="middle" fill="#6b4a1c" font-family="Liberation Sans, sans-serif">?</text></svg>
<div class="abs" style="left:31px;top:56px;width:1px;height:19px;background:#ddd7bd"></div>
<div class="abs" style="left:32px;top:56px;width:1px;height:19px;background:#fffef6"></div>
<div style="position:absolute;top:58px;white-space:nowrap;font-size:11px;line-height:14px;color:#2e2608;left:40px;font-weight:bold;-webkit-text-stroke:0.25px;letter-spacing:0.51px;">Заполнить</div>
<div class="abs" style="left:108px;top:56px;width:1px;height:19px;background:#ddd7bd"></div>
<div class="abs" style="left:109px;top:56px;width:1px;height:19px;background:#fffef6"></div>
<div style="position:absolute;top:58px;white-space:nowrap;font-size:11px;line-height:14px;color:#2e2608;left:116px;letter-spacing:-0.3px;">Отбор</div>
<div style="position:absolute;top:82px;white-space:nowrap;font-size:11px;line-height:14px;color:#2e2b18;left:15px;letter-spacing:-0.04px;">Терминал сбора данных:</div>
<div class="fld" style="left:172px;top:81px;width:394px;height:19px;background:#fdfbf0">
<div style="position:absolute;top:2px;white-space:nowrap;font-size:11px;line-height:14px;color:#000;left:3px;letter-spacing:-0.04px;">Терминал сбора данных</div>
<div class="btn" style="right:0;width:15px;height:17px;border-radius:0 3px 3px 0;border-left-color:#aca791;background:#f1eedf"><div class="darr" style="left:3px;top:7px;background:#aaa595"></div></div>
</div>
<div style="position:absolute;top:104px;white-space:nowrap;font-size:11px;line-height:14px;color:#8a6510;left:15px;font-weight:bold;-webkit-text-stroke:0.25px;letter-spacing:0.66px;">Отбор</div>
<div class="sec" style="left:14px;top:118px;width:911px"></div>
<div class="cb" style="left:20px;top:133px"></div>
<div style="position:absolute;top:133px;white-space:nowrap;font-size:11px;line-height:14px;color:#2e2b18;left:35px;letter-spacing:0.17px;">На складе:</div>
<div class="fld" style="left:172px;top:130px;width:276px">
<div style="position:absolute;top:2px;white-space:nowrap;font-size:11px;line-height:14px;color:#000;left:2px;">Равно</div>
<div class="btn" style="right:0;border-radius:0 3px 3px 0"><div class="darr" style="left:3px;top:8px"></div></div>
</div>
<div class="fld" style="left:458px;top:130px;width:461px">
<div class="btn" style="right:15px;border-radius:0"><div class="abs" style="left:2px;top:12px;width:2px;height:2px;background:#4d3d0a;box-shadow:4px 0 0 #4d3d0a,8px 0 0 #4d3d0a"></div></div>
<div class="btn" style="right:0;border-radius:0 3px 3px 0"><svg class="abs" style="left:3px;top:6px;width:9px;height:8px" viewBox="0 0 9 8"><path d="M1 0.8 L8 7.2 M8 0.8 L1 7.2" stroke="#4d3d0a" stroke-width="1.6" fill="none"/></svg></div>
</div>
<div class="cb" style="left:20px;top:158px"></div>
<div style="position:absolute;top:158px;white-space:nowrap;font-size:11px;line-height:14px;color:#2e2b18;left:36px;letter-spacing:-0.17px;">Тип цен:</div>
<div class="fld" style="left:172px;top:155px;width:276px">
<div style="position:absolute;top:2px;white-space:nowrap;font-size:11px;line-height:14px;color:#000;left:2px;">Равно</div>
<div class="btn" style="right:0;border-radius:0 3px 3px 0"><div class="darr" style="left:3px;top:8px"></div></div>
</div>
<div class="fld" style="left:458px;top:155px;width:461px">
<div class="btn" style="right:15px;border-radius:0"><div class="abs" style="left:2px;top:12px;width:2px;height:2px;background:#4d3d0a;box-shadow:4px 0 0 #4d3d0a,8px 0 0 #4d3d0a"></div></div>
<div class="btn" style="right:0;border-radius:0 3px 3px 0"><svg class="abs" style="left:3px;top:6px;width:9px;height:8px" viewBox="0 0 9 8"><path d="M1 0.8 L8 7.2 M8 0.8 L1 7.2" stroke="#4d3d0a" stroke-width="1.6" fill="none"/></svg></div>
</div>
<div class="cb" style="left:20px;top:183px"><svg style="position:absolute;left:-1px;top:-1px;width:13px;height:13px" viewBox="0 0 13 13"><path d="M3,6 L5.6,9 L10.1,3.7" stroke="#24242c" stroke-width="2.2" fill="none"/></svg></div>
<div style="position:absolute;top:183px;white-space:nowrap;font-size:11px;line-height:14px;color:#2e2b18;left:35px;letter-spacing:0.02px;">Номенклатура:</div>
<div class="fld" style="left:172px;top:180px;width:276px">
<div style="position:absolute;top:2px;white-space:nowrap;font-size:11px;line-height:14px;color:#000;left:2px;">Равно</div>
<div class="btn" style="right:0;border-radius:0 3px 3px 0"><div class="darr" style="left:3px;top:8px"></div></div>
</div>
<div class="fld" style="left:458px;top:180px;width:461px">
<div class="abs" style="left:1px;top:1px;width:427px;height:16px;background:#4d66c2;outline:1px dotted #8d9bd6;outline-offset:-1px"></div>
<div style="position:absolute;top:2px;white-space:nowrap;font-size:11px;line-height:14px;color:#fff;left:2px;letter-spacing:0.1px;">Флексопрофен 2,5% 10мл</div>
<div class="btn" style="right:15px;border-radius:0"><div class="abs" style="left:2px;top:12px;width:2px;height:2px;background:#4d3d0a;box-shadow:4px 0 0 #4d3d0a,8px 0 0 #4d3d0a"></div></div>
<div class="btn" style="right:0;border-radius:0 3px 3px 0"><svg class="abs" style="left:3px;top:6px;width:9px;height:8px" viewBox="0 0 9 8"><path d="M1 0.8 L8 7.2 M8 0.8 L1 7.2" stroke="#4d3d0a" stroke-width="1.6" fill="none"/></svg></div>
</div>
<div class="cb" style="left:20px;top:208px"></div>
<div style="position:absolute;top:208px;white-space:nowrap;font-size:11px;line-height:14px;color:#2e2b18;left:35px;letter-spacing:0.02px;">Номенклатурная группа:</div>
<div class="fld" style="left:172px;top:205px;width:276px">
<div style="position:absolute;top:2px;white-space:nowrap;font-size:11px;line-height:14px;color:#000;left:2px;">Равно</div>
<div class="btn" style="right:0;border-radius:0 3px 3px 0"><div class="darr" style="left:3px;top:8px"></div></div>
</div>
<div class="fld" style="left:458px;top:205px;width:461px">
<div class="btn" style="right:15px;border-radius:0"><div class="abs" style="left:2px;top:12px;width:2px;height:2px;background:#4d3d0a;box-shadow:4px 0 0 #4d3d0a,8px 0 0 #4d3d0a"></div></div>
<div class="btn" style="right:0;border-radius:0 3px 3px 0"><svg class="abs" style="left:3px;top:6px;width:9px;height:8px" viewBox="0 0 9 8"><path d="M1 0.8 L8 7.2 M8 0.8 L1 7.2" stroke="#4d3d0a" stroke-width="1.6" fill="none"/></svg></div>
</div>
<div style="position:absolute;top:234px;white-space:nowrap;font-size:11px;line-height:14px;color:#8a6510;left:14px;font-weight:bold;-webkit-text-stroke:0.25px;letter-spacing:0.55px;">Выгружаемые товары</div>
<div class="sec" style="left:14px;top:247px;width:911px"></div>
<svg class="abs" style="left:19px;top:258px;width:16px;height:16px" viewBox="0 0 16 16"><defs><linearGradient id="sg" x1="0" y1="0" x2="0" y2="1"><stop offset="0" stop-color="#ffffff"/><stop offset="1" stop-color="#cfdef0"/></linearGradient></defs><rect x="5.5" y="0.5" width="9.6" height="9.6" rx="1" fill="#a9bfdb" stroke="#5f7fa8" stroke-width="0.9"/><rect x="3.2" y="2.6" width="9.6" height="9.6" rx="1" fill="#c3d4e9" stroke="#5f7fa8" stroke-width="0.9"/><rect x="0.6" y="4.8" width="9.8" height="9.8" rx="1" fill="url(#sg)" stroke="#5f7fa8" stroke-width="0.9"/><path d="M2,9.4 L4.6,12 L10.6,6" fill="none" stroke="#2fa32a" stroke-width="2.3"/></svg>
<svg class="abs" style="left:42px;top:258px;width:16px;height:16px" viewBox="0 0 16 16"><rect x="5.5" y="0.5" width="9.6" height="9.6" rx="1" fill="#a9bfdb" stroke="#5f7fa8" stroke-width="0.9"/><rect x="3.2" y="2.6" width="9.6" height="9.6" rx="1" fill="#c3d4e9" stroke="#5f7fa8" stroke-width="0.9"/><rect x="0.6" y="4.8" width="9.8" height="9.8" rx="1" fill="url(#sg)" stroke="#5f7fa8" stroke-width="0.9"/></svg>
<div class="abs" style="left:14px;top:279px;width:911px;height:469px;border:1px solid #aca791;background:#fff"></div>
<div class="hdr" style="left:15px;width:20px"></div>
<div class="hdr" style="left:35px;width:450px"><div style="position:absolute;top:3px;white-space:nowrap;font-size:11px;line-height:14px;color:#4a3f14;left:4px;letter-spacing:0.06px;">Номенклатура</div></div>
<div class="hdr" style="left:485px;width:216px"><div style="position:absolute;top:3px;white-space:nowrap;font-size:11px;line-height:14px;color:#4a3f14;left:4px;letter-spacing:-0.19px;">Штрихкод</div></div>
<div class="hdr" style="left:701px;width:90px"><div style="position:absolute;top:3px;white-space:nowrap;font-size:11px;line-height:14px;color:#4a3f14;left:4px;letter-spacing:-0.2px;">Ед.</div></div>
<div class="hdr" style="left:791px;width:118px"><div style="position:absolute;top:3px;white-space:nowrap;font-size:11px;line-height:14px;color:#4a3f14;left:4px;letter-spacing:0.09px;">Количество</div></div>
<div class="abs" style="left:15px;top:300px;width:894px;height:1px;background:#d3cba9"></div>
<div class="vl" style="left:34px"></div>
<div class="vl" style="left:484px"></div>
<div class="vl" style="left:700px"></div>
<div class="vl" style="left:790px"></div>
<div class="abs" style="left:0;top:301px;width:925px;height:446px;overflow:hidden">
<div class="row" style="top:0px">
<div class="cb" style="left:4px;top:3px;border-color:#aaa590"></div>
<div style="position:absolute;top:3px;white-space:nowrap;font-size:11px;line-height:14px;color:#000;left:25px;">Флексопрофен 2,5% 10мл</div>
<div style="position:absolute;top:3px;white-space:nowrap;font-size:11px;line-height:14px;color:#000;left:475px;letter-spacing:-0.156px;">2000001275498</div>
<div style="position:absolute;top:3px;white-space:nowrap;font-size:11px;line-height:14px;color:#000;left:690px;letter-spacing:-0.2px;">шт</div>
</div>
<div class="row" style="top:19px">
<div class="cb" style="left:4px;top:3px;border-color:#aaa590"></div>
<div style="position:absolute;top:3px;white-space:nowrap;font-size:11px;line-height:14px;color:#000;left:25px;">Флексопрофен 2,5% 10мл</div>
<div style="position:absolute;top:3px;white-space:nowrap;font-size:11px;line-height:14px;color:#000;left:475px;letter-spacing:-0.156px;">2000001275498</div>
<div style="position:absolute;top:3px;white-space:nowrap;font-size:11px;line-height:14px;color:#000;left:690px;letter-spacing:-0.2px;">шт</div>
</div>
<div class="row" style="top:38px">
<div class="cb" style="left:4px;top:3px;border-color:#aaa590"></div>
<div style="position:absolute;top:3px;white-space:nowrap;font-size:11px;line-height:14px;color:#000;left:25px;">Флексопрофен 2,5% 10мл</div>
<div style="position:absolute;top:3px;white-space:nowrap;font-size:11px;line-height:14px;color:#000;left:475px;letter-spacing:-0.156px;">2000001275498</div>
<div style="position:absolute;top:3px;white-space:nowrap;font-size:11px;line-height:14px;color:#000;left:690px;letter-spacing:-0.2px;">шт</div>
</div>
<div class="row" style="top:57px">
<div class="cb" style="left:4px;top:3px;border-color:#aaa590"></div>
<div style="position:absolute;top:3px;white-space:nowrap;font-size:11px;line-height:14px;color:#000;left:25px;">Флексопрофен 2,5% 10мл</div>
<div style="position:absolute;top:3px;white-space:nowrap;font-size:11px;line-height:14px;color:#000;left:475px;letter-spacing:-0.156px;">2000001287071</div>
<div style="position:absolute;top:3px;white-space:nowrap;font-size:11px;line-height:14px;color:#000;left:690px;letter-spacing:-0.2px;">шт</div>
</div>
<div class="row" style="top:76px">
<div class="cb" style="left:4px;top:3px;border-color:#aaa590"></div>
<div style="position:absolute;top:3px;white-space:nowrap;font-size:11px;line-height:14px;color:#000;left:25px;">Флексопрофен 2,5% 10мл</div>
<div style="position:absolute;top:3px;white-space:nowrap;font-size:11px;line-height:14px;color:#000;left:475px;letter-spacing:-0.156px;">2000001287071</div>
<div style="position:absolute;top:3px;white-space:nowrap;font-size:11px;line-height:14px;color:#000;left:690px;letter-spacing:-0.2px;">шт</div>
</div>
<div class="row" style="top:95px">
<div class="cb" style="left:4px;top:3px;border-color:#aaa590"></div>
<div style="position:absolute;top:3px;white-space:nowrap;font-size:11px;line-height:14px;color:#000;left:25px;">Флексопрофен 2,5% 10мл</div>
<div style="position:absolute;top:3px;white-space:nowrap;font-size:11px;line-height:14px;color:#000;left:475px;letter-spacing:-0.156px;">2000001287071</div>
<div style="position:absolute;top:3px;white-space:nowrap;font-size:11px;line-height:14px;color:#000;left:690px;letter-spacing:-0.2px;">шт</div>
</div>
<div class="row" style="top:114px">
<div class="cb" style="left:4px;top:3px;border-color:#aaa590"></div>
<div style="position:absolute;top:3px;white-space:nowrap;font-size:11px;line-height:14px;color:#000;left:25px;">Флексопрофен 2,5% 10мл</div>
<div style="position:absolute;top:3px;white-space:nowrap;font-size:11px;line-height:14px;color:#000;left:475px;letter-spacing:-0.156px;">2000001287071</div>
<div style="position:absolute;top:3px;white-space:nowrap;font-size:11px;line-height:14px;color:#000;left:690px;letter-spacing:-0.2px;">шт</div>
</div>
<div class="row" style="top:133px">
<div class="cb" style="left:4px;top:3px;border-color:#aaa590"></div>
<div style="position:absolute;top:3px;white-space:nowrap;font-size:11px;line-height:14px;color:#000;left:25px;">Флексопрофен 2,5% 10мл</div>
<div style="position:absolute;top:3px;white-space:nowrap;font-size:11px;line-height:14px;color:#000;left:475px;letter-spacing:-0.156px;">2000001287071</div>
<div style="position:absolute;top:3px;white-space:nowrap;font-size:11px;line-height:14px;color:#000;left:690px;letter-spacing:-0.2px;">шт</div>
</div>
<div class="row" style="top:152px">
<div class="cb" style="left:4px;top:3px;border-color:#aaa590"></div>
<div style="position:absolute;top:3px;white-space:nowrap;font-size:11px;line-height:14px;color:#000;left:25px;">Флексопрофен 2,5% 10мл</div>
<div style="position:absolute;top:3px;white-space:nowrap;font-size:11px;line-height:14px;color:#000;left:475px;letter-spacing:-0.156px;">2000001287071</div>
<div style="position:absolute;top:3px;white-space:nowrap;font-size:11px;line-height:14px;color:#000;left:690px;letter-spacing:-0.2px;">шт</div>
</div>
<div class="row" style="top:171px">
<div class="cb" style="left:4px;top:3px;border-color:#aaa590"></div>
<div style="position:absolute;top:3px;white-space:nowrap;font-size:11px;line-height:14px;color:#000;left:25px;">Флексопрофен 2,5% 10мл</div>
<div style="position:absolute;top:3px;white-space:nowrap;font-size:11px;line-height:14px;color:#000;left:475px;letter-spacing:-0.156px;">2000001302750</div>
<div style="position:absolute;top:3px;white-space:nowrap;font-size:11px;line-height:14px;color:#000;left:690px;letter-spacing:-0.2px;">шт</div>
</div>
<div class="row" style="top:190px">
<div class="cb" style="left:4px;top:3px;border-color:#aaa590"></div>
<div style="position:absolute;top:3px;white-space:nowrap;font-size:11px;line-height:14px;color:#000;left:25px;">Флексопрофен 2,5% 10мл</div>
<div style="position:absolute;top:3px;white-space:nowrap;font-size:11px;line-height:14px;color:#000;left:475px;letter-spacing:-0.156px;">2000001302750</div>
<div style="position:absolute;top:3px;white-space:nowrap;font-size:11px;line-height:14px;color:#000;left:690px;letter-spacing:-0.2px;">шт</div>
</div>
<div class="row" style="top:209px">
<div class="cb" style="left:4px;top:3px;border-color:#aaa590"></div>
<div style="position:absolute;top:3px;white-space:nowrap;font-size:11px;line-height:14px;color:#000;left:25px;">Флексопрофен 2,5% 10мл</div>
<div style="position:absolute;top:3px;white-space:nowrap;font-size:11px;line-height:14px;color:#000;left:475px;letter-spacing:-0.156px;">2000001302750</div>
<div style="position:absolute;top:3px;white-space:nowrap;font-size:11px;line-height:14px;color:#000;left:690px;letter-spacing:-0.2px;">шт</div>
</div>
<div class="row" style="top:228px">
<div class="cb" style="left:4px;top:3px;border-color:#aaa590"></div>
<div style="position:absolute;top:3px;white-space:nowrap;font-size:11px;line-height:14px;color:#000;left:25px;">Флексопрофен 2,5% 10мл</div>
<div style="position:absolute;top:3px;white-space:nowrap;font-size:11px;line-height:14px;color:#000;left:475px;letter-spacing:-0.156px;">2000001302750</div>
<div style="position:absolute;top:3px;white-space:nowrap;font-size:11px;line-height:14px;color:#000;left:690px;letter-spacing:-0.2px;">шт</div>
</div>
<div class="row" style="top:247px">
<div class="cb" style="left:4px;top:3px;border-color:#aaa590"></div>
<div style="position:absolute;top:3px;white-space:nowrap;font-size:11px;line-height:14px;color:#000;left:25px;">Флексопрофен 2,5% 10мл</div>
<div style="position:absolute;top:3px;white-space:nowrap;font-size:11px;line-height:14px;color:#000;left:475px;letter-spacing:-0.156px;">2000001302750</div>
<div style="position:absolute;top:3px;white-space:nowrap;font-size:11px;line-height:14px;color:#000;left:690px;letter-spacing:-0.2px;">шт</div>
</div>
<div class="row" style="top:266px">
<div class="cb" style="left:4px;top:3px;border-color:#aaa590"></div>
<div style="position:absolute;top:3px;white-space:nowrap;font-size:11px;line-height:14px;color:#000;left:25px;">Флексопрофен 2,5% 10мл</div>
<div style="position:absolute;top:3px;white-space:nowrap;font-size:11px;line-height:14px;color:#000;left:475px;letter-spacing:-0.156px;">2000001302750</div>
<div style="position:absolute;top:3px;white-space:nowrap;font-size:11px;line-height:14px;color:#000;left:690px;letter-spacing:-0.2px;">шт</div>
<div style="position:absolute;top:3px;white-space:nowrap;font-size:11px;line-height:14px;color:#000;right:4px;letter-spacing:-0.3px;">1,000</div>
</div>
<div class="row" style="top:285px">
<div class="cb" style="left:4px;top:3px;border-color:#aaa590"></div>
<div style="position:absolute;top:3px;white-space:nowrap;font-size:11px;line-height:14px;color:#000;left:25px;">Флексопрофен 2,5% 10мл</div>
<div style="position:absolute;top:3px;white-space:nowrap;font-size:11px;line-height:14px;color:#000;left:475px;letter-spacing:-0.156px;">2000001307458</div>
<div style="position:absolute;top:3px;white-space:nowrap;font-size:11px;line-height:14px;color:#000;left:690px;letter-spacing:-0.2px;">шт</div>
</div>
<div class="row" style="top:304px">
<div class="cb" style="left:4px;top:3px;border-color:#aaa590"></div>
<div style="position:absolute;top:3px;white-space:nowrap;font-size:11px;line-height:14px;color:#000;left:25px;">Флексопрофен 2,5% 10мл</div>
<div style="position:absolute;top:3px;white-space:nowrap;font-size:11px;line-height:14px;color:#000;left:475px;letter-spacing:-0.156px;">2000001307458</div>
<div style="position:absolute;top:3px;white-space:nowrap;font-size:11px;line-height:14px;color:#000;left:690px;letter-spacing:-0.2px;">шт</div>
</div>
<div class="row" style="top:323px">
<div class="cb" style="left:4px;top:3px;border-color:#aaa590"></div>
<div style="position:absolute;top:3px;white-space:nowrap;font-size:11px;line-height:14px;color:#000;left:25px;">Флексопрофен 2,5% 10мл</div>
<div style="position:absolute;top:3px;white-space:nowrap;font-size:11px;line-height:14px;color:#000;left:475px;letter-spacing:-0.156px;">2000001307458</div>
<div style="position:absolute;top:3px;white-space:nowrap;font-size:11px;line-height:14px;color:#000;left:690px;letter-spacing:-0.2px;">шт</div>
</div>
<div class="row" style="top:342px">
<div class="cb" style="left:4px;top:3px;border-color:#aaa590"></div>
<div style="position:absolute;top:3px;white-space:nowrap;font-size:11px;line-height:14px;color:#000;left:25px;">Флексопрофен 2,5% 10мл</div>
<div style="position:absolute;top:3px;white-space:nowrap;font-size:11px;line-height:14px;color:#000;left:475px;letter-spacing:-0.156px;">2000001307458</div>
<div style="position:absolute;top:3px;white-space:nowrap;font-size:11px;line-height:14px;color:#000;left:690px;letter-spacing:-0.2px;">шт</div>
</div>
<div class="row" style="top:361px">
<div class="cb" style="left:4px;top:3px;border-color:#aaa590"></div>
<div style="position:absolute;top:3px;white-space:nowrap;font-size:11px;line-height:14px;color:#000;left:25px;">Флексопрофен 2,5% 10мл</div>
<div style="position:absolute;top:3px;white-space:nowrap;font-size:11px;line-height:14px;color:#000;left:475px;letter-spacing:-0.156px;">2000001307458</div>
<div style="position:absolute;top:3px;white-space:nowrap;font-size:11px;line-height:14px;color:#000;left:690px;letter-spacing:-0.2px;">шт</div>
</div>
<div class="row" style="top:380px">
<div class="cb" style="left:4px;top:3px;border-color:#aaa590"></div>
<div style="position:absolute;top:3px;white-space:nowrap;font-size:11px;line-height:14px;color:#000;left:25px;">Флексопрофен 2,5% 10мл</div>
<div style="position:absolute;top:3px;white-space:nowrap;font-size:11px;line-height:14px;color:#000;left:475px;letter-spacing:-0.156px;">2000001307458</div>
<div style="position:absolute;top:3px;white-space:nowrap;font-size:11px;line-height:14px;color:#000;left:690px;letter-spacing:-0.2px;">шт</div>
<div style="position:absolute;top:3px;white-space:nowrap;font-size:11px;line-height:14px;color:#000;right:4px;letter-spacing:-0.3px;">3,000</div>
</div>
<div class="row" style="top:399px">
<div class="cb" style="left:4px;top:3px;border-color:#aaa590"></div>
<div style="position:absolute;top:3px;white-space:nowrap;font-size:11px;line-height:14px;color:#000;left:25px;">Флексопрофен 2,5% 10мл</div>
<div style="position:absolute;top:3px;white-space:nowrap;font-size:11px;line-height:14px;color:#000;left:475px;letter-spacing:-0.156px;">2000001273722</div>
<div style="position:absolute;top:3px;white-space:nowrap;font-size:11px;line-height:14px;color:#000;left:690px;letter-spacing:-0.2px;">шт</div>
</div>
<div class="row" style="top:418px">
<div class="cb" style="left:4px;top:3px;border-color:#aaa590"></div>
<div style="position:absolute;top:3px;white-space:nowrap;font-size:11px;line-height:14px;color:#000;left:25px;">Флексопрофен 2,5% 10мл</div>
<div style="position:absolute;top:3px;white-space:nowrap;font-size:11px;line-height:14px;color:#000;left:475px;letter-spacing:-0.156px;">2000001273722</div>
<div style="position:absolute;top:3px;white-space:nowrap;font-size:11px;line-height:14px;color:#000;left:690px;letter-spacing:-0.2px;">шт</div>
</div>
<div class="row" style="top:437px">
<div class="cb" style="left:4px;top:3px;border-color:#aaa590"></div>
<div style="position:absolute;top:3px;white-space:nowrap;font-size:11px;line-height:14px;color:#000;left:25px;">Флексопрофен 2,5% 10мл</div>
<div style="position:absolute;top:3px;white-space:nowrap;font-size:11px;line-height:14px;color:#000;left:475px;letter-spacing:-0.156px;">2000001273722</div>
<div style="position:absolute;top:3px;white-space:nowrap;font-size:11px;line-height:14px;color:#000;left:690px;letter-spacing:-0.2px;">шт</div>
</div>
</div>
<div class="abs" style="left:908px;top:280px;width:16px;height:467px;background:#f8f6ef;border-left:1px solid #aca791"></div>
<div class="abs" style="left:909px;top:280px;width:15px;height:20px;background:linear-gradient(to bottom,#f9f6e8,#ebe4c6)"><svg class="abs" style="left:4px;top:6px;width:7px;height:7px" viewBox="0 0 7 7"><polygon points="3.5,0 7,7 0,7" fill="#8a8a8a"/></svg></div>
<div class="abs" style="left:908px;top:300px;width:16px;height:1px;background:#aca791"></div>
<div class="abs" style="left:909px;top:332px;width:15px;height:79px;background:linear-gradient(to right,#f5f1dc,#e6dfbf);border-top:1px solid #aca791;border-bottom:1px solid #aca791"><div class="abs" style="left:6px;top:37px;width:3px;height:3px;border-radius:2px;background:#c3bda4"></div></div>
<div class="abs" style="left:909px;top:726px;width:15px;height:21px;background:linear-gradient(to bottom,#f9f6e8,#ebe4c6);border-top:1px solid #c9c2a3"><svg class="abs" style="left:4px;top:7px;width:7px;height:7px" viewBox="0 0 7 7"><polygon points="0,0 7,0 3.5,7" fill="#8a8a8a"/></svg></div>
<div class="abs" style="left:6px;top:756px;width:927px;height:1px;background:#aca791"></div>
<div class="abs" style="left:6px;top:757px;width:927px;height:24px;background:linear-gradient(to bottom,#f7f4e4,#f3f0dc)"></div>
<div style="position:absolute;top:762px;white-space:nowrap;font-size:11px;line-height:14px;color:#2b2506;left:820px;letter-spacing:0.2px;">Выгрузить</div>
<div style="position:absolute;top:762px;white-space:nowrap;font-size:11px;line-height:14px;color:#2b2506;left:884px;letter-spacing:0.16px;">Закрыть</div>
</div></body></html>
